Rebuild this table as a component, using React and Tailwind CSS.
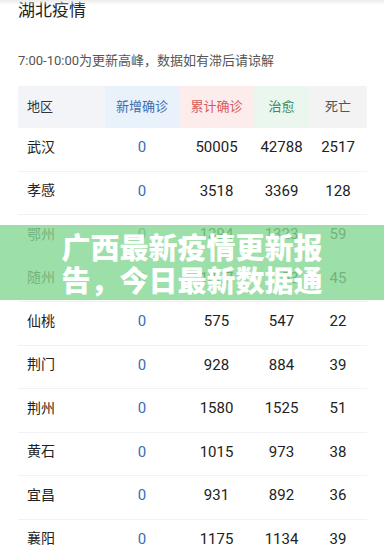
const rows = [
  ['武汉', '0', '50005', '42788', '2517'],
  ['孝感', '0', '3518', '3369', '128'],
  ['鄂州', '0', '1394', '1323', '59'],
  ['随州', '0', '1307', '1253', '45'],
  ['仙桃', '0', '575', '547', '22'],
  ['荆门', '0', '928', '884', '39'],
  ['荆州', '0', '1580', '1525', '51'],
  ['黄石', '0', '1015', '973', '38'],
  ['宜昌', '0', '931', '892', '36'],
  ['襄阳', '0', '1175', '1134', '39'],
];

export default function App() {
  return (
    <div className="relative w-[384px] h-[546px] overflow-hidden bg-white font-['Roboto','Noto_Sans_CJK_SC',sans-serif]">
      {/* faint top shadow */}
      <div className="absolute top-0 left-0 right-0 h-[5px] bg-gradient-to-b from-[#ececec] to-white/0" />

      <div className="px-[18px]">
        <h1 className="h-[20px] text-[17px] leading-[20px] text-[#222] font-normal">湖北疫情</h1>
        <p className="mt-[32px] text-[13px] leading-[18px] text-[#555]">
          7:00-10:00为更新高峰，数据如有滞后请谅解
        </p>

        {/* table */}
        <div className="mt-[16px] w-[349px]">
          <div className="flex h-[42px] items-center text-[13px]">
            <div className="w-[87px] h-full flex items-center pl-[9px] bg-[#f2f4f7] text-[#333]">地区</div>
            <div className="w-[74px] h-full flex items-center justify-center bg-[#e9f1fb] text-[#3c6cae]">新增确诊</div>
            <div className="w-[75px] h-full flex items-center justify-center bg-[#fcecec] text-[#d55a5c]">累计确诊</div>
            <div className="w-[55px] h-full flex items-center justify-center bg-[#ebf7ee] text-[#3e8a57]">治愈</div>
            <div className="w-[58px] h-full flex items-center justify-center bg-[#f3f3f3] text-[#555]">死亡</div>
          </div>

          {rows.map((r) => (
            <div key={r[0]} className="flex h-[43.5px] items-center border-b border-[#f2f2f2] text-[15px] text-[#222] pb-[4px]">
              <div className="w-[87px] pl-[9px] text-[14px]">{r[0]}</div>
              <div className="w-[74px] text-center text-[#3b6cb3]">{r[1]}</div>
              <div className="w-[75px] text-center">{r[2]}</div>
              <div className="w-[55px] text-center">{r[3]}</div>
              <div className="w-[58px] text-center">{r[4]}</div>
            </div>
          ))}
        </div>
      </div>

      {/* green title band */}
      <div className="absolute left-0 right-0 top-[225px] h-[75px] bg-[rgba(132,215,146,0.8)] flex items-center justify-center">
        <p className="w-[268px] text-center text-[29px] leading-[33px] font-black text-white font-['Noto_Sans_CJK_SC',sans-serif]">
          广西最新疫情更新报告，今日最新数据通
        </p>
      </div>
    </div>
  );
}
